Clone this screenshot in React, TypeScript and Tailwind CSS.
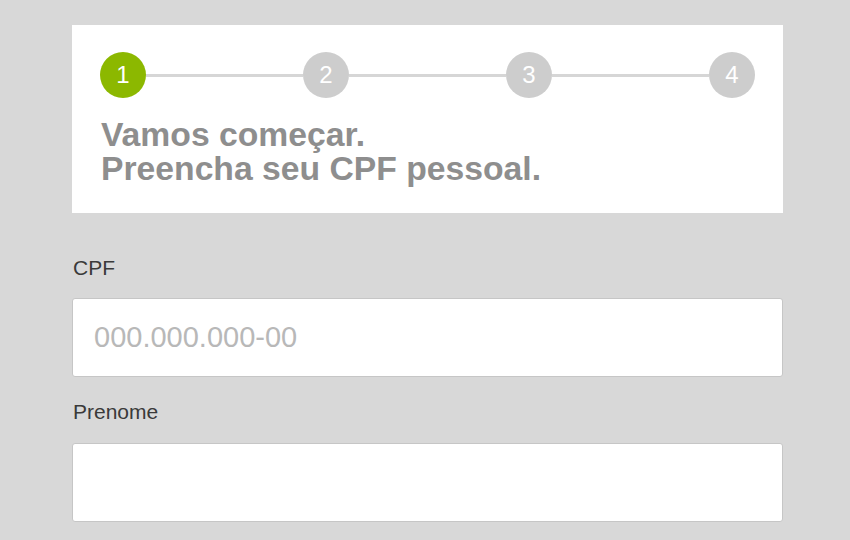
export default function App() {
  const steps = [1, 2, 3, 4];
  return (
    <div className="w-[850px] h-[540px] overflow-hidden bg-[#d8d8d8]" style={{ fontFamily: '"Liberation Sans", Arial, sans-serif' }}>
      <div className="pt-[25px] px-[72px] w-[855px]">
        <div className="bg-white h-[188px] px-[28px] pt-[27px]">
          <div className="flex items-center">
            {steps.map((s, i) => (
              <div key={s} className={i < steps.length - 1 ? "flex items-center flex-1" : "flex items-center"}>
                <div className={`w-[46px] h-[46px] rounded-full flex items-center justify-center text-white text-[24px] ${s === 1 ? "bg-[#8cb800]" : "bg-[#cdcdcd]"}`}>
                  {s}
                </div>
                {i < steps.length - 1 && <div className="flex-1 h-[3px] bg-[#d6d6d6]" />}
              </div>
            ))}
          </div>
          <div className="mt-[19px] pl-[1px] text-[33.7px] leading-[34px] font-bold text-[#8e8e8e]">
            <div>Vamos começar.</div>
            <div>Preencha seu CPF pessoal.</div>
          </div>
        </div>
        <div className="mt-[43px] pl-[1px] text-[21px] leading-[24px] text-[#3a3a3a]">CPF</div>
        <div className="mt-[18px] h-[79px] bg-white border border-[#c6c6c6] rounded-[3px] flex items-center pl-[21px]">
          <span className="text-[29px] text-[#b8b8b8]">000.000.000-00</span>
        </div>
        <div className="mt-[23px] pl-[1px] text-[21px] leading-[24px] text-[#3a3a3a]">Prenome</div>
        <div className="mt-[19px] h-[79px] bg-white border border-[#c6c6c6] rounded-[3px]" />
      </div>
    </div>
  );
}
